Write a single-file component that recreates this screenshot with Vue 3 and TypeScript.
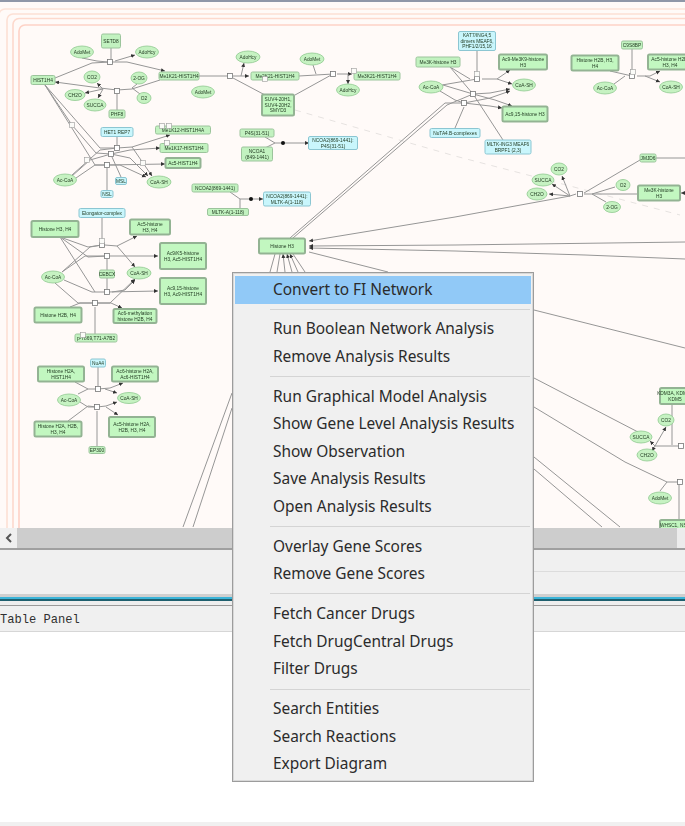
<template>
  <div class="window">
    <div class="top-edge"></div>

    <div class="canvas">
      <svg class="diagram" width="685" height="526" viewBox="0 2 685 526">
        <defs>
          <marker id="arrow" markerUnits="userSpaceOnUse" markerWidth="5" markerHeight="5" refX="4" refY="2" orient="auto">
            <path d="M0 0 L4 2 L0 4 Z" fill="#333" />
          </marker>
        </defs>

        <rect
          v-for="b in compartments"
          :key="b.x"
          :x="b.x"
          :y="b.y"
          width="760"
          height="620"
          rx="6"
          fill="none"
          :stroke="b.color"
          stroke-width="1.6"
        />

        <polyline class="faint" points="295,110 455,156 570,186 680,215" />

        <polyline
          v-for="(e, i) in edges"
          :key="'e' + i"
          class="edge"
          :points="e.pts"
          :marker-end="e.arrow ? 'url(#arrow)' : undefined"
        />

        <rect
          v-for="(r, i) in reactions"
          :key="'r' + i"
          class="reaction"
          :x="r[0] - 2.5"
          :y="r[1] - 2.5"
          width="5"
          height="5"
        />
        <circle v-for="d in dots" :key="d[0]" :cx="d[0]" :cy="d[1]" r="2" fill="#111" />

        <g v-for="n in nodes" :key="n.label + n.x + n.y">
          <ellipse v-if="n.kind === 'oval'" class="oval" :cx="n.x" :cy="n.y" :rx="n.w / 2" :ry="n.h / 2" />
          <rect
            v-else
            :class="n.kind"
            :x="n.x - n.w / 2"
            :y="n.y - n.h / 2"
            :width="n.w"
            :height="n.h"
            rx="1.5"
          />
          <text class="label" :x="n.x" :y="n.y - (n.label.split('|').length - 1) * 2.7 + 1.8">
            <tspan
              v-for="(line, i) in n.label.split('|')"
              :key="i"
              :x="n.x"
              :dy="i ? 5.4 : 0"
            >{{ line }}</tspan>
          </text>
        </g>

        <rect
          v-for="(r, i) in tags"
          :key="'t' + i"
          class="tag"
          :x="r[0] - 2.5"
          :y="r[1] - 2.5"
          width="5"
          height="5"
        />
      </svg>
    </div>

    <div class="hscroll">
      <div class="hscroll-btn">
        <svg width="10" height="10" viewBox="0 0 10 10">
          <path d="M7 1 L3 5 L7 9" fill="none" stroke="#555" stroke-width="2" />
        </svg>
      </div>
      <div class="hscroll-thumb"></div>
      <div class="hscroll-rest"></div>
    </div>

    <div class="bottom-panel">
      <div class="panel-rule"></div>
    </div>

    <div class="split-bar"></div>

    <div class="table-tab">Table Panel</div>
    <div class="table-body"></div>
    <div class="status-strip"></div>

    <div class="context-menu">
      <template v-for="(group, g) in menuGroups" :key="g">
        <div v-if="g > 0" class="menu-sep" :class="{ short: g === 1 }"></div>
        <div
          v-for="item in group"
          :key="item"
          class="menu-item"
          :class="{ active: item === 'Convert to FI Network' }"
        >{{ item }}</div>
      </template>
    </div>
  </div>
</template>

<script setup lang="ts">
interface DiagramNode {
  label: string;
  x: number;
  y: number;
  w: number;
  h: number;
  kind: 'box' | 'thick' | 'oval' | 'blue';
}

const menuGroups: string[][] = [
  ['Convert to FI Network'],
  ['Run Boolean Network Analysis', 'Remove Analysis Results'],
  [
    'Run Graphical Model Analysis',
    'Show Gene Level Analysis Results',
    'Show Observation',
    'Save Analysis Results',
    'Open Analysis Results'
  ],
  ['Overlay Gene Scores', 'Remove Gene Scores'],
  ['Fetch Cancer Drugs', 'Fetch DrugCentral Drugs', 'Filter Drugs'],
  ['Search Entities', 'Search Reactions', 'Export Diagram']
];

const compartments = [
  { x: -1, y: 9, color: '#fde3d8' },
  { x: 7, y: 14, color: '#fde0d4' },
  { x: 13, y: 18.5, color: '#fdd9cd' },
  { x: 19, y: 25, color: '#fed2c6' }
];

function oval(label: string, x: number, y: number, w = 23, h = 12): DiagramNode {
  return { label, x, y, w, h, kind: 'oval' };
}
function box(label: string, x: number, y: number, w: number, h: number): DiagramNode {
  return { label, x, y, w, h, kind: 'box' };
}
function thick(label: string, x: number, y: number, w: number, h: number): DiagramNode {
  return { label, x, y, w, h, kind: 'thick' };
}
function blue(label: string, x: number, y: number, w: number, h: number): DiagramNode {
  return { label, x, y, w, h, kind: 'blue' };
}

const nodes: DiagramNode[] = [
  box('SETD8', 111, 41, 19, 14),
  oval('AdoMet', 82, 52),
  oval('AdoHcy', 147, 52),
  box('HIST1H4', 43, 80, 24, 9),
  oval('CO2', 92, 77, 16, 12),
  oval('2-OG', 139, 78, 16, 12),
  oval('O2', 144, 98, 14, 11),
  oval('CH2O', 75, 95, 20, 11),
  oval('SUCCA', 95, 105, 22, 12),
  box('PHF8', 117, 114, 16, 8),
  box('Me1K21-HIST1H4', 179, 76, 40, 8),
  oval('AdoMet', 203, 92),
  blue('HET1 REP7', 117, 132, 32, 9),
  box('Me1K12-HIST1H4A', 183, 130, 55, 8),
  box('Me1K17-HIST1H4', 184, 148, 48, 9),
  thick('Ac5-HIST1H4', 183, 163, 35, 10),
  oval('CoA-SH', 159, 182, 24, 12),
  blue('MSL', 121, 181, 11, 7),
  blue('NSL', 107, 194, 12, 7),
  oval('Ac-CoA', 65, 180),
  blue('Elongator-complex', 102, 213, 46, 9),
  thick('Histone H3, H4', 55, 229, 47, 16),
  thick('Ac5-histone|H3, H4', 150, 227, 40, 15),
  thick('Ac9/K5-histone|H3, Ac5-HIST1H4', 183, 256, 46, 26),
  oval('Ac-CoA', 53, 277),
  oval('CoA-SH', 139, 273, 24, 12),
  box('CEBCX', 107, 274, 15, 8),
  thick('Ac9,15-histone|H3, Ac9-HIST1H4', 183, 291, 46, 26),
  thick('Histone H2B, H4', 58, 315, 47, 15),
  thick('Ac6-methylation|histone H2B, H4', 135, 316, 43, 14),
  box('p-T869,T71-A7B2', 96, 338, 42, 8),
  blue('NuA4', 98, 363, 15, 8),
  thick('Histone H2A,|HIST1H4', 61, 374, 46, 15),
  thick('Ac6-histone H2A,|Ac6-HIST1H4', 135, 374, 46, 15),
  oval('Ac-CoA', 69, 400),
  oval('CoA-SH', 129, 398, 23, 11),
  thick('Histone H2A, H2B,|H3, H4', 58, 429, 47, 15),
  thick('Ac5-histone H2A,|H2B, H3, H4', 132, 427, 46, 20),
  box('EP300', 97, 450, 16, 7),

  oval('AdoHcy', 248, 57, 24, 12),
  box('Me2K21-HIST1H4', 275, 76, 48, 8),
  oval('AdoMet', 312, 59, 24, 12),
  box('Me3K21-HIST1H4', 377, 76, 46, 8),
  oval('AdoHcy', 348, 90),
  thick('SUV4-20H1,|SUV4-20H2,|SMYD3', 278, 105, 32, 21),
  box('P4S(31-51)', 257, 133, 34, 8),
  box('NCOA1|(849-1441)', 257, 154, 31, 14),
  blue('NCOA2(869-1441):|P4S(31-51)', 333, 143, 49, 13),
  box('NCOA2(869-1441)', 215, 188, 46, 8),
  box('MLTK-A(1-118)', 228, 212, 41, 7),
  blue('NCOA2(869-1441):|MLTK-A(1-118)', 287, 199, 47, 14),
  thick('Histone H3', 282, 246, 46, 15),

  blue('KAT7/ING4,5|dimers MEAF6,|PHF1/2/15,16', 477, 41, 37, 19),
  box('Me3K-histone H3', 438, 62, 44, 10),
  thick('Ac9-Me3K9-histone|H3', 523, 62, 48, 15),
  oval('CoA-SH', 524, 85),
  oval('Ac-CoA', 431, 87, 24, 12),
  thick('Ac9,15-histone H3', 525, 114, 45, 15),
  blue('NuTA4.B-complexes', 455, 133, 50, 9),
  blue('MLTK-ING3 MEAF6|BRPF1 (2,3)', 508, 147, 46, 14),

  thick('Histone H2B, H3,|H4', 595, 63, 47, 15),
  box('C9S8BP', 632, 45, 21, 8),
  thick('Ac5-histone H2B,|H3, H4', 670, 62, 44, 15),
  oval('Ac-CoA', 605, 88),
  oval('CoA-SH', 671, 87),

  oval('CO2', 559, 169, 16, 12),
  oval('SUCCA', 543, 180, 22, 12),
  oval('CH2O', 537, 194, 20, 12),
  box('JMJD6', 648, 158, 16, 8),
  oval('O2', 623, 185, 14, 11),
  oval('2-OG', 612, 207, 17, 11),
  thick('Me3K-histone|H3', 659, 193, 42, 15),

  thick('KDM3A, KDM4A|KDM5', 675, 396, 30, 16),
  oval('CO2', 666, 420, 16, 12),
  oval('SUCCA', 641, 437, 22, 12),
  oval('CH2O', 647, 455, 20, 12),
  oval('AdoMet', 660, 498),
  thick('WHSC1, NSD', 675, 525, 30, 10)
];

const lines: string[] = [
  // HIST1H4 methylation
  '55,78 92,63 110,62', '82,58 97,61 108,62', '111,48 111,59',
  '110,62 127,62 165,71>', '115,61 135,55>',
  '160,80 132,89 117,90 100,88 55,82>',
  '103,89 97,83>', '103,89 85,93>', '103,89 98,98>',
  '132,88 137,84', '132,88 140,94', '117,110 117,94',
  // HIST1H4 acetylation
  '45,85 100,148 117,148', '45,85 72,125 96,153 111,154', '45,85 95,165 107,165',
  '72,175 100,150 117,148', '72,176 90,160 111,154', '76,178 95,165 107,165',
  '117,148 132,147 170,135>', '111,154 130,150 160,148>', '107,165 165,164>',
  '132,147 152,176>', '111,154 130,158 148,176>', '107,165 120,165 146,177>',
  '117,137 117,145', '121,177 112,157', '107,190 107,168',
  // Histone H3, H4 acetylation
  '102,218 102,242', '60,237 88,247 102,245', '60,237 88,257 107,256', '60,237 95,292',
  '62,272 90,247 102,245', '62,272 85,256 107,256', '64,280 92,292 107,292',
  '105,245 117,246 137,236>', '117,246 135,267>', '107,256 158,256>',
  '107,292 158,291>', '112,292 125,290 135,280>', '107,270 107,259', '107,278 107,289',
  '70,307 80,303 95,303', '55,283 78,303 95,303', '95,303 111,303 122,308>',
  '95,303 110,303 135,279>', '95,334 95,307',
  // H2A
  '98,367 98,386', '75,382 88,389 98,389', '78,394 88,389',
  '98,389 110,388 123,383>', '105,389 117,393>',
  '80,402 88,407 97,407', '68,421 88,406 97,407', '97,407 106,406 117,402>', '106,407 118,415>',
  '97,446 97,411', '183,527 232,393', '193,527 232,408',
  // H4K21 methylation
  '199,76 230,76', '233,76 249,76>', '241,76 244,63>', '265,95 233,78', '295,95 333,74',
  '299,76 333,74', '313,65 316,74', '337,74 352,74>', '348,74 348,84>',
  // NCOA2 binding
  '265,137 275,143 283,143 309,143>', '265,148 275,143',
  '230,192 240,199 251,199 263,199>', '240,208 240,199',
  // Histone H3
  '290,238 445,103 464,103', '293,238 447,105 473,94',
  '450,67 473,94', '442,85 477,79', '450,67 470,79', '477,50 477,76',
  '482,79 497,79 510,70>', '497,79 512,84>',
  '473,94 490,93 510,89>', '464,103 490,98 510,91>', '473,94 495,100 512,106>', '464,103 490,106 502,108>',
  '440,91 455,100 464,103', '443,85 473,94', '455,128 464,107', '503,140 475,97',
  '610,71 632,76', '614,84 625,76', '637,76 650,76 660,71>', '645,76 660,82>', '632,49 632,73',
  '570,196 576,194', '640,160 584,193', '656,158 685,158', '638,194 584,194',
  '615,187 592,194', '606,202 592,194',
  '570,196 562,176>', '570,196 552,184>', '570,196 549,194>', '685,193 681,193>',
  '570,196 455,217 309,241>', '685,242 455,245 309,246>', '685,259 585,255 455,251 309,248>', '388,272 309,252',
  '270,272 275,254', '277,272 280,254', '285,272 283,254>', '292,272 287,254>', '298,272 290,254>', '305,272 293,254',
  // right of the menu
  '534,310 685,348', '534,378 638,432', '534,407 625,462 667,482 680,482',
  '534,457 620,527', '534,469 602,527',
  '672,404 672,445', '680,446 655,446 666,427>', '655,446 650,441>', '655,446 652,451>',
  '660,491 667,482', '679,485 679,520'
];

const edges = lines.map((l) => ({
  pts: l.replace('>', ''),
  arrow: l.endsWith('>')
}));

const reactions: number[][] = [
  [110, 62], [117, 91], [117, 148], [111, 154], [107, 165],
  [102, 245], [107, 256], [107, 292], [95, 303], [98, 389], [97, 407],
  [230, 76], [333, 74], [477, 79], [473, 94], [464, 103], [632, 76], [580, 194],
  [681, 446], [680, 482]
];

const tags: number[][] = [
  [162, 126], [169, 126], [167, 143], [72, 125], [87, 160], [143, 163],
  [102, 241], [265, 79], [354, 71], [477, 74], [83, 335], [633, 72]
];

const dots: number[][] = [[283, 143], [251, 199]];
</script>

<style>
html,
body {
  margin: 0;
  background: #fff;
}
</style>

<style scoped>
.window {
  position: relative;
  width: 685px;
  height: 826px;
  overflow: hidden;
  display: flex;
  flex-direction: column;
  background: #fff;
}

.top-edge {
  height: 2px;
  background: #8f97a8;
}

.canvas {
  height: 526px;
  background: #fffaf8;
  overflow: hidden;
}

.diagram {
  display: block;
  filter: blur(0.4px);
}

.edge {
  fill: none;
  stroke: #969696;
  stroke-width: 1;
}

.faint {
  fill: none;
  stroke: #e6e2e0;
  stroke-width: 1;
  stroke-dasharray: 6 6;
}

.reaction {
  fill: #fff;
  stroke: #777;
  stroke-width: 0.8;
}

.tag {
  fill: #fbfbf8;
  stroke: #9a9a9a;
  stroke-width: 0.6;
}

.box {
  fill: #c2f2c0;
  stroke: #9cc49c;
  stroke-width: 1;
}

.thick {
  fill: #c2f7c0;
  stroke: #93b393;
  stroke-width: 2;
}

.oval {
  fill: #c6f2c2;
  stroke: #8fc98f;
  stroke-width: 0.8;
}

.blue {
  fill: #c9f6fc;
  stroke: #8cc6d2;
  stroke-width: 1;
}

.label {
  font-family: "Liberation Sans", Arial, sans-serif;
  font-size: 4.8px;
  fill: #1f381f;
  text-anchor: middle;
}

.hscroll {
  height: 20px;
  display: flex;
  flex-shrink: 0;
}

.hscroll-btn {
  width: 17px;
  background: #f0f0f0;
  display: flex;
  align-items: center;
  justify-content: center;
}

.hscroll-thumb {
  width: 660px;
  background: #cdcdcd;
}

.hscroll-rest {
  flex: 1;
  background: #ececec;
}

.bottom-panel {
  height: 44px;
  border-top: 2px solid #a0a0a0;
  background: #f0f0f0;
  flex-shrink: 0;
}

.panel-rule {
  margin: 21px 0 0 300px;
  height: 1px;
  background: #dcdcdc;
}

.split-bar {
  height: 12px;
  flex-shrink: 0;
  box-sizing: border-box;
  background: linear-gradient(
    to bottom,
    #cfcfcf 0 3px,
    #3bb4d8 3px 5px,
    #1f5f6e 5px 7px,
    #eeeeee 7px 11px,
    #9a9a9a 11px 12px
  );
}

.table-tab {
  height: 25px;
  flex-shrink: 0;
  background: #f0f0f0;
  border-bottom: 1px solid #d6d6d6;
  font-family: "Liberation Mono", "DejaVu Sans Mono", monospace;
  font-size: 12.1px;
  line-height: 28px;
  color: #303030;
}

.table-body {
  flex: 1;
  background: #fff;
}

.status-strip {
  height: 4px;
  flex-shrink: 0;
  background: #f0f0f0;
}

.context-menu {
  position: absolute;
  left: 232px;
  top: 272px;
  width: 296px;
  padding: 3px 2px;
  border: 1px solid #9c9c9c;
  box-shadow: inset 0 0 0 1px #d8d8d8;
  background: #f0f0f0;
  font-family: "Noto Sans", "Open Sans", Arial, sans-serif;
  font-size: 15.45px;
  color: #2b2b2b;
}

.menu-item {
  height: 27.5px;
  line-height: 26px;
  padding-left: 38px;
  white-space: nowrap;
}

.menu-item.active {
  background: #91c9f7;
}

.menu-sep {
  height: 12.6px;
  margin: 0 1px 0 35px;
  display: flex;
  align-items: center;
}

.menu-sep.short {
  height: 11.5px;
}

.menu-sep::after {
  content: "";
  flex: 1;
  height: 1px;
  background: #d4d4d4;
}
</style>
